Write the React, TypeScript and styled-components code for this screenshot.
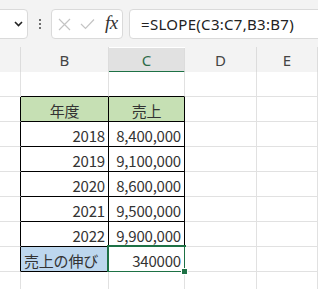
import React from 'react';
import styled, { createGlobalStyle, css } from 'styled-components';

const GlobalStyle = createGlobalStyle`
  html, body {
    margin: 0;
    padding: 0;
    background: #ffffff;
    overflow: hidden;
  }
  body {
    font-family: "Noto Sans CJK JP", "Noto Sans", sans-serif;
  }
`;

const GRID = '#e1e1e1';
const DARK = '#000000';
const GREEN = '#1e7145';

const Sheet = styled.div`
  width: 318px;
  height: 289px;
  overflow: hidden;
  background: #fff;
`;

const Toolbar = styled.div`
  height: 47px;
  background: #f3f3f3;
  display: flex;
  align-items: center;
  box-sizing: border-box;
  padding-top: 1px;
`;

const NameBox = styled.div`
  width: 38px;
  height: 30px;
  margin-left: -10px;
  box-sizing: border-box;
  background: #fff;
  border: 1px solid #dadada;
  border-radius: 4px;
  display: flex;
  align-items: center;
  justify-content: flex-end;
  padding-right: 4px;
`;

const Dots = styled.div`
  width: 23px;
  display: flex;
  flex-direction: column;
  align-items: center;
  gap: 2px;
  span {
    width: 2px;
    height: 2px;
    background: #444;
    border-radius: 1px;
  }
`;

const FxBox = styled.div`
  width: 72px;
  height: 30px;
  box-sizing: border-box;
  background: #fff;
  border: 1px solid #dadada;
  border-radius: 4px;
  display: flex;
  align-items: center;
  padding-left: 6px;
  gap: 9px;
`;

const Fx = styled.span`
  font-family: "Liberation Serif", "DejaVu Serif", serif;
  font-style: italic;
  font-size: 19px;
  color: #333;
  margin-left: 1px;
  letter-spacing: -0.5px;
  padding-bottom: 2px;
`;

const FormulaBox = styled.div`
  flex: 1;
  margin-left: 6px;
  margin-right: -10px;
  height: 30px;
  box-sizing: border-box;
  background: #fff;
  border: 1px solid #dadada;
  border-radius: 4px;
  display: flex;
  align-items: center;
  padding-left: 11px;
  font-family: "Noto Sans", "Liberation Sans", sans-serif;
  font-size: 15px;
  letter-spacing: 0.3px;
  color: #222;
`;

const Grid = styled.div`
  display: grid;
  grid-template-columns: 21px 88px 76px 72px 61px;
  grid-auto-rows: 25px;
`;

const HeaderCell = styled.div<{ $selected?: boolean }>`
  height: 26px;
  box-sizing: border-box;
  display: flex;
  align-items: center;
  justify-content: center;
  font-family: "Noto Sans", "Liberation Sans", sans-serif;
  font-size: 15px;
  color: #444;
  background: #f3f3f3;
  border-right: 1px solid #dcdcdc;
  border-bottom: 1px solid #d4d4d4;
  padding-top: 1px;
  ${({ $selected }) =>
    $selected &&
    css`
      background: #e1e1e1;
      color: #2e6b48;
      border-bottom: 2px solid ${GREEN};
      margin-top: 1px;
      height: 25px;
    `}
`;

type Align = 'left' | 'center' | 'right';

const Cell = styled.div<{
  $align?: Align;
  $fill?: string;
  $r?: boolean;
  $b?: boolean;
  $sel?: boolean;
}>`
  position: relative;
  box-sizing: border-box;
  display: flex;
  align-items: center;
  padding: 2px 3px 0 3px;
  font-size: 15px;
  color: #333;
  white-space: nowrap;
  background: ${({ $fill }) => $fill || '#fff'};
  border-right: 1px solid ${({ $r }) => ($r ? DARK : GRID)};
  border-bottom: 1px solid ${({ $b }) => ($b ? DARK : GRID)};
  justify-content: ${({ $align }) =>
    $align === 'center' ? 'center' : $align === 'right' ? 'flex-end' : 'flex-start'};
  ${({ $sel }) =>
    $sel &&
    css`
      &::after {
        content: '';
        position: absolute;
        left: -2px;
        top: -2px;
        right: -2px;
        bottom: -2px;
        border: 2px solid ${GREEN};
        pointer-events: none;
      }
      &::before {
        content: '';
        position: absolute;
        right: -4px;
        bottom: -4px;
        width: 5px;
        height: 5px;
        background: ${GREEN};
        border: 1px solid #fff;
        z-index: 2;
      }
    `}
`;

const Num = styled.span`
  font-family: "Noto Sans CJK JP", sans-serif;
  letter-spacing: -0.2px;
`;

interface CellData {
  text?: string;
  align?: Align;
  fill?: string;
  r?: boolean;
  b?: boolean;
  sel?: boolean;
}

const GREEN_FILL = '#c6e0b4';
const BLUE_FILL = '#bdd7ee';

const years = [
  ['2018', '8,400,000'],
  ['2019', '9,100,000'],
  ['2020', '8,600,000'],
  ['2021', '9,500,000'],
  ['2022', '9,900,000'],
];

const rows: CellData[][] = [
  [{}, { b: true }, { b: true }, {}, {}],
  [
    { r: true },
    { text: '年度', align: 'center', fill: GREEN_FILL, r: true, b: true },
    { text: '売上', align: 'center', fill: GREEN_FILL, r: true, b: true },
    {},
    {},
  ],
  ...years.map(([y, v]) => [
    { r: true },
    { text: y, align: 'right' as Align, r: true, b: true },
    { text: v, align: 'right' as Align, r: true, b: true },
    {},
    {},
  ]),
  [
    { r: true },
    { text: '売上の伸び', align: 'left', fill: BLUE_FILL, r: true, b: true },
    { text: '340000', align: 'right', r: true, b: true, sel: true },
    {},
    {},
  ],
  [{}, {}, {}, {}, {}],
];

const Chevron = () => (
  <svg width="9" height="6" viewBox="0 0 9 6">
    <path d="M1 1 L4.5 4.5 L8 1" fill="none" stroke="#222" strokeWidth="1.6" />
  </svg>
);

const Cross = () => (
  <svg width="13" height="13" viewBox="0 0 13 13">
    <path d="M1 1 L12 12 M12 1 L1 12" fill="none" stroke="#c4c4c4" strokeWidth="1.2" />
  </svg>
);

const Check = () => (
  <svg width="15" height="12" viewBox="0 0 15 12">
    <path d="M1 6 L5.5 10.5 L14 1.5" fill="none" stroke="#c4c4c4" strokeWidth="1.2" />
  </svg>
);

const App: React.FC = () => {
  const cols = ['', 'B', 'C', 'D', 'E'];
  return (
    <Sheet>
      <GlobalStyle />
      <Toolbar>
        <NameBox>
          <Chevron />
        </NameBox>
        <Dots>
          <span />
          <span />
          <span />
        </Dots>
        <FxBox>
          <Cross />
          <Check />
          <Fx>fx</Fx>
        </FxBox>
        <FormulaBox>=SLOPE(C3:C7,B3:B7)</FormulaBox>
      </Toolbar>
      <Grid>
        {cols.map((c) => (
          <HeaderCell key={c || 'A'} $selected={c === 'C'}>
            {c}
          </HeaderCell>
        ))}
        {rows.map((row, ri) =>
          row.map((cell, ci) => (
            <Cell
              key={`${ri}-${ci}`}
              $align={cell.align}
              $fill={cell.fill}
              $r={cell.r}
              $b={cell.b}
              $sel={cell.sel}
            >
              {cell.text && <Num>{cell.text}</Num>}
            </Cell>
          )),
        )}
      </Grid>
    </Sheet>
  );
};

export default App;
